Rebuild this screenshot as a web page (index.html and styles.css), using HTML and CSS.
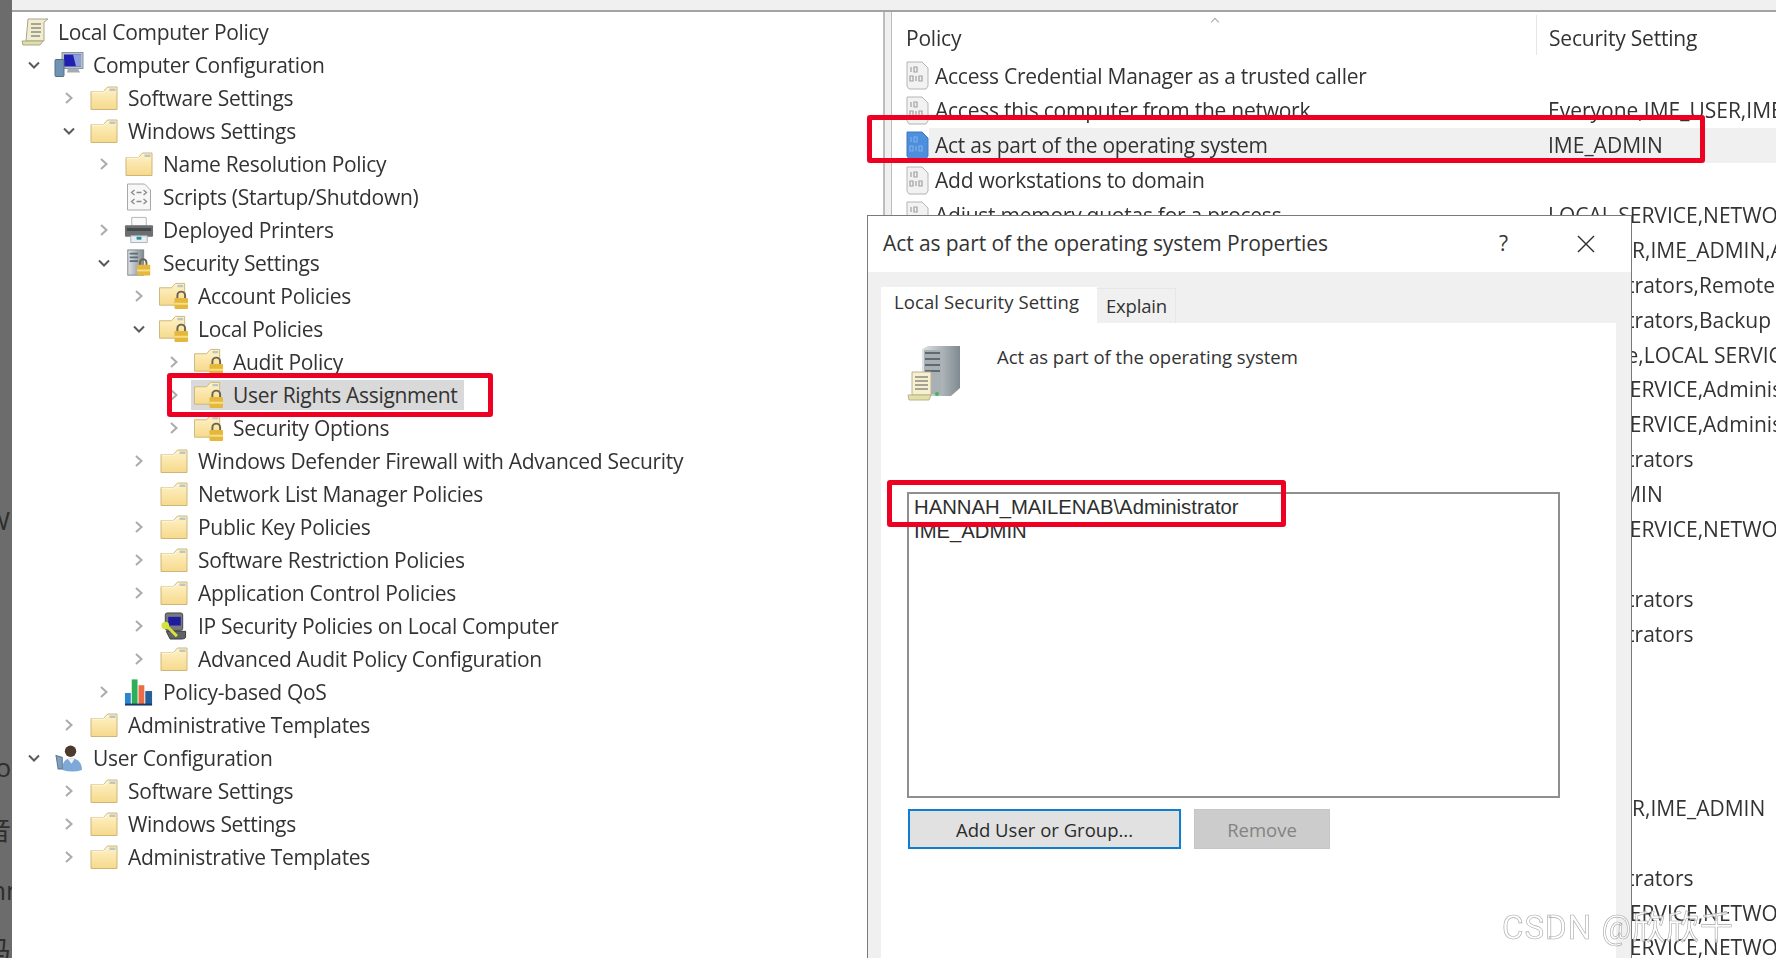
FILE: index.html
```html
<!DOCTYPE html>
<html lang="en">

<head>
    <meta charset="UTF-8">
    <meta name="viewport" content="width=device-width, initial-scale=1.0">
    <title>Local Security Policy</title>
    <link rel="stylesheet" href="styles.css">
</head>

<body>

    <svg class="defs" width="0" height="0">
        <defs>
            <linearGradient id="g-folder" x1="0" y1="0" x2="0" y2="1">
                <stop offset="0" stop-color="#fff3c8" />
                <stop offset="1" stop-color="#f6d98c" />
            </linearGradient>
            <linearGradient id="g-tower" x1="0" y1="0" x2="1" y2="0">
                <stop offset="0" stop-color="#dfe3e6" />
                <stop offset="1" stop-color="#7f8a90" />
            </linearGradient>
            <symbol id="i-chev-right" viewBox="0 0 14 14">
                <polyline points="4,2 9.5,7 4,12" fill="none" stroke="#ababab" stroke-width="2" />
            </symbol>
            <symbol id="i-chev-down" viewBox="0 0 14 14">
                <polyline points="2,4.5 7,9.5 12,4.5" fill="none" stroke="#5a5a5a" stroke-width="2" />
            </symbol>
            <symbol id="i-folder" viewBox="-1.5 -2 30 28">
                <path d="M.5 5.5H13L17 1H26.500V23.500H.5Z" fill="url(#g-folder)" stroke="#cdb678" />
                <path d="M19 2.500H25V5H19Z" fill="#b9c6cc" />
                <path d="M1 6H13.500L17.500 2" fill="none" stroke="#fffbe6" />
            </symbol>
            <symbol id="i-lock-folder" viewBox="0 0 31 28">
                <path d="M.5 5.500H13L17 1H26.500V23.500H.5Z" fill="url(#g-folder)" stroke="#cdb678" />
                <path d="M19 2.500H25V5H19Z" fill="#b9c6cc" />
                <path d="M19 17V13.500A4 4 0 0 1 27 13.500V17" fill="none" stroke="#6b6350" stroke-width="2" />
                <rect x="16" y="16" width="14" height="11.500" rx="1" fill="#e5b83c" />
                <rect x="16" y="21" width="14" height="2" fill="#f7df8a" />
            </symbol>
            <symbol id="i-scroll" viewBox="0 0 28 28">
                <path d="M7 1H27L23 4V23H5Z" fill="#f3edd0" stroke="#a7a68c" />
                <path d="M10 6H20M10 10H20M10 14H20M10 18H19" stroke="#8c8c84" stroke-width="1.500" />
                <path d="M1 23H22L19 27H2Z" fill="#dfe0a8" stroke="#a7a68c" />
            </symbol>
            <symbol id="i-computer" viewBox="0 0 30 27">
                <rect x="8" y="1" width="21" height="16" fill="#b8c0c8" stroke="#8b959d" />
                <rect x="10" y="3" width="17" height="12" fill="#1f1fb0" />
                <path d="M19 3H27V15H22Z" fill="#8d9fd8" />
                <rect x="1" y="8" width="9" height="17" rx="1" fill="#6f93b3" stroke="#576f86" />
                <path d="M14 17H24L26 21H13Z" fill="#a4acb3" />
            </symbol>
            <symbol id="i-script" viewBox="0 0 25 28">
                <path d="M1 1H18L24 7V27H1Z" fill="#f7f7f7" stroke="#a8a8a8" />
                <path d="M8 7L5 9.500 8 12M17 7L20 9.500 17 12M8 16L5 18.500 8 21M17 16L20 18.500 17 21M10 9.500H15M10 18.500H15" fill="none" stroke="#8a8a8a" stroke-width="1.300" />
            </symbol>
            <symbol id="i-printer" viewBox="0 0 31 28">
                <path d="M8 1H23V10H8Z" fill="#fafafa" stroke="#b5b5b5" />
                <rect x="1" y="9" width="29" height="12" rx="1" fill="#6c6f72" />
                <rect x="3" y="12" width="25" height="3" fill="#45484b" />
                <path d="M7 20H24V27H7Z" fill="#e9eef3" stroke="#a7b3bd" />
                <rect x="13" y="21" width="5" height="3" fill="#2b8f9c" />
            </symbol>
            <symbol id="i-sec-server" viewBox="0 0 26 30">
                <rect x="1" y="1" width="17" height="27" fill="url(#g-tower)" stroke="#78848a" />
                <path d="M3 5H12M3 9H12M3 13H12" stroke="#5c6b78" stroke-width="2" />
                <path d="M14 18V14.500A3.500 3.500 0 0 1 21 14.500V18" fill="none" stroke="#6b6350" stroke-width="2" />
                <rect x="11" y="17" width="14" height="11.500" rx="1" fill="#e5b83c" />
                <rect x="11" y="22" width="14" height="2" fill="#f7df8a" />
            </symbol>
            <symbol id="i-key-pc" viewBox="0 0 28 29">
                <rect x="5" y="1" width="18" height="18" rx="2" fill="#77797c" stroke="#3f4144" />
                <rect x="8" y="5" width="13" height="9" fill="#1d1ca0" />
                <path d="M6 20H26V26Q26 28 22 28H10Z" fill="#606366" stroke="#37393b" />
                <circle cx="5" cy="14" r="4" fill="#d8e23c" />
                <path d="M7 15L17 25" stroke="#d8e23c" stroke-width="3" />
            </symbol>
            <symbol id="i-chart" viewBox="0 0 31 28">
                <rect x="1" y="15" width="6" height="12" fill="#2a86d0" />
                <rect x="8" y="1" width="6" height="26" fill="#2fae5a" />
                <rect x="15" y="7" width="6" height="20" fill="#ea6d45" />
                <rect x="22" y="13" width="7" height="14" fill="#23609c" />
                <path d="M1 27H29" stroke="#153a63" stroke-width="2" />
            </symbol>
            <symbol id="i-user" viewBox="0 0 27 27">
                <path d="M7 25C7 16 11 14 16 14S26 17 26 25Q17 28 7 25Z" fill="#7ea8d8" />
                <circle cx="15" cy="7" r="5.500" fill="#4d3a2e" />
                <path d="M12 14L16 19 19 14Z" fill="#f2f2f2" />
                <path d="M1 11L7 13V24L3 24Z" fill="#7fa0c0" stroke="#5c7b99" />
            </symbol>
            <symbol id="i-policy" viewBox="0 0 23 29">
                <path d="M1 1H16L22 7V25L20 28H3L1 25Z" fill="#f2f2f2" stroke="#b4b4b4" />
                <path d="M5 6V11M8 6H11V11H8ZM4 15H7V20H4ZM10 15V20M13 15H16V20H13Z" fill="none" stroke="#a0a0a0" stroke-width="1.200" />
            </symbol>
            <symbol id="i-policy-sel" viewBox="0 0 23 29">
                <path d="M1 1H16L22 7V25L20 28H3L1 25Z" fill="#4d8fdc" stroke="#3f78bf" />
                <path d="M5 6V11M8 6H11V11H8ZM4 15H7V20H4ZM10 15V20M13 15H16V20H13Z" fill="none" stroke="#7fb0ea" stroke-width="1.200" />
            </symbol>
            <symbol id="i-server-doc" viewBox="0 0 54 58">
                <path d="M15 5L21 2H53V44L44 52H15Z" fill="url(#g-tower)" />
                <path d="M17 6H34V50H17Z" fill="#a9b0b3" />
                <path d="M18 9H33M18 15H33M18 21H33M18 27H33" stroke="#5f6b72" stroke-width="2" />
                <circle cx="30" cy="50" r="2" fill="#3fb65f" />
                <path d="M5 28H24V51H5Z" fill="#f6efd0" stroke="#b9b38f" />
                <path d="M8 33H21M8 37H21M8 41H21M8 45H21" stroke="#8d8b7e" stroke-width="1.500" />
                <path d="M1 51H24L22 56H2Z" fill="#e3e0a6" stroke="#b9b38f" />
            </symbol>
        </defs>
    </svg>

    <div class="screen">
        <div class="strip">
            <span class="frag frag-a">W</span>
            <span class="frag frag-b">Vo</span>
            <span class="frag frag-c">音</span>
            <span class="frag frag-d">mn</span>
            <span class="frag frag-e">马</span>
        </div>

        <div class="console">
            <div class="topbar"></div>
            <div class="panes">
                <div class="tree">
                    <div class="row root"><span class="node"><svg class="icon"><use href="#i-scroll" /></svg><span class="label">Local Computer Policy</span></span></div>
                    <div class="row lv0"><svg class="twisty"><use href="#i-chev-down" /></svg><span class="node"><svg class="icon"><use href="#i-computer" /></svg><span class="label">Computer Configuration</span></span></div>
                    <div class="row lv1"><svg class="twisty"><use href="#i-chev-right" /></svg><span class="node"><svg class="icon"><use href="#i-folder" /></svg><span class="label">Software Settings</span></span></div>
                    <div class="row lv1"><svg class="twisty"><use href="#i-chev-down" /></svg><span class="node"><svg class="icon"><use href="#i-folder" /></svg><span class="label">Windows Settings</span></span></div>
                    <div class="row lv2"><svg class="twisty"><use href="#i-chev-right" /></svg><span class="node"><svg class="icon"><use href="#i-folder" /></svg><span class="label">Name Resolution Policy</span></span></div>
                    <div class="row lv2"><svg class="twisty"></svg><span class="node"><svg class="icon"><use href="#i-script" /></svg><span class="label">Scripts (Startup/Shutdown)</span></span></div>
                    <div class="row lv2"><svg class="twisty"><use href="#i-chev-right" /></svg><span class="node"><svg class="icon"><use href="#i-printer" /></svg><span class="label">Deployed Printers</span></span></div>
                    <div class="row lv2"><svg class="twisty"><use href="#i-chev-down" /></svg><span class="node"><svg class="icon"><use href="#i-sec-server" /></svg><span class="label">Security Settings</span></span></div>
                    <div class="row lv3"><svg class="twisty"><use href="#i-chev-right" /></svg><span class="node"><svg class="icon"><use href="#i-lock-folder" /></svg><span class="label">Account Policies</span></span></div>
                    <div class="row lv3"><svg class="twisty"><use href="#i-chev-down" /></svg><span class="node"><svg class="icon"><use href="#i-lock-folder" /></svg><span class="label">Local Policies</span></span></div>
                    <div class="row lv4"><svg class="twisty"><use href="#i-chev-right" /></svg><span class="node"><svg class="icon"><use href="#i-lock-folder" /></svg><span class="label">Audit Policy</span></span></div>
                    <div class="row lv4"><svg class="twisty"><use href="#i-chev-right" /></svg><span class="node selected"><svg class="icon"><use href="#i-lock-folder" /></svg><span class="label">User Rights Assignment</span></span></div>
                    <div class="row lv4"><svg class="twisty"><use href="#i-chev-right" /></svg><span class="node"><svg class="icon"><use href="#i-lock-folder" /></svg><span class="label">Security Options</span></span></div>
                    <div class="row lv3"><svg class="twisty"><use href="#i-chev-right" /></svg><span class="node"><svg class="icon"><use href="#i-folder" /></svg><span class="label">Windows Defender Firewall with Advanced Security</span></span></div>
                    <div class="row lv3"><svg class="twisty"></svg><span class="node"><svg class="icon"><use href="#i-folder" /></svg><span class="label">Network List Manager Policies</span></span></div>
                    <div class="row lv3"><svg class="twisty"><use href="#i-chev-right" /></svg><span class="node"><svg class="icon"><use href="#i-folder" /></svg><span class="label">Public Key Policies</span></span></div>
                    <div class="row lv3"><svg class="twisty"><use href="#i-chev-right" /></svg><span class="node"><svg class="icon"><use href="#i-folder" /></svg><span class="label">Software Restriction Policies</span></span></div>
                    <div class="row lv3"><svg class="twisty"><use href="#i-chev-right" /></svg><span class="node"><svg class="icon"><use href="#i-folder" /></svg><span class="label">Application Control Policies</span></span></div>
                    <div class="row lv3"><svg class="twisty"><use href="#i-chev-right" /></svg><span class="node"><svg class="icon"><use href="#i-key-pc" /></svg><span class="label">IP Security Policies on Local Computer</span></span></div>
                    <div class="row lv3"><svg class="twisty"><use href="#i-chev-right" /></svg><span class="node"><svg class="icon"><use href="#i-folder" /></svg><span class="label">Advanced Audit Policy Configuration</span></span></div>
                    <div class="row lv2"><svg class="twisty"><use href="#i-chev-right" /></svg><span class="node"><svg class="icon"><use href="#i-chart" /></svg><span class="label">Policy-based QoS</span></span></div>
                    <div class="row lv1"><svg class="twisty"><use href="#i-chev-right" /></svg><span class="node"><svg class="icon"><use href="#i-folder" /></svg><span class="label">Administrative Templates</span></span></div>
                    <div class="row lv0"><svg class="twisty"><use href="#i-chev-down" /></svg><span class="node"><svg class="icon"><use href="#i-user" /></svg><span class="label">User Configuration</span></span></div>
                    <div class="row lv1"><svg class="twisty"><use href="#i-chev-right" /></svg><span class="node"><svg class="icon"><use href="#i-folder" /></svg><span class="label">Software Settings</span></span></div>
                    <div class="row lv1"><svg class="twisty"><use href="#i-chev-right" /></svg><span class="node"><svg class="icon"><use href="#i-folder" /></svg><span class="label">Windows Settings</span></span></div>
                    <div class="row lv1"><svg class="twisty"><use href="#i-chev-right" /></svg><span class="node"><svg class="icon"><use href="#i-folder" /></svg><span class="label">Administrative Templates</span></span></div>
                </div>

                <div class="sash"></div>

                <div class="list">
                    <div class="list-head">
                        <span class="head-cell head-policy">Policy<span class="sort-caret"></span></span>
                        <span class="head-cell head-setting">Security Setting</span>
                    </div>
                    <div class="item"><svg class="item-icon"><use href="#i-policy" /></svg><span class="cell name">Access Credential Manager as a trusted caller</span><span class="cell"></span></div>
                    <div class="item"><svg class="item-icon"><use href="#i-policy" /></svg><span class="cell name">Access this computer from the network</span><span class="cell">Everyone,IME_USER,IME_ADMIN</span></div>
                    <div class="item current"><svg class="item-icon"><use href="#i-policy-sel" /></svg><span class="cell name">Act as part of the operating system</span><span class="cell">IME_ADMIN</span></div>
                    <div class="item"><svg class="item-icon"><use href="#i-policy" /></svg><span class="cell name">Add workstations to domain</span><span class="cell"></span></div>
                    <div class="item"><svg class="item-icon"><use href="#i-policy" /></svg><span class="cell name">Adjust memory quotas for a process</span><span class="cell">LOCAL SERVICE,NETWORK SERVICE</span></div>
                    <div class="item"><span></span><span class="cell name"></span><span class="cell">IME_USER,IME_ADMIN,Administrators</span></div>
                    <div class="item"><span></span><span class="cell name"></span><span class="cell">Administrators,Remote Desktop Users</span></div>
                    <div class="item"><span></span><span class="cell name"></span><span class="cell">Administrators,Backup Operators</span></div>
                    <div class="item"><span></span><span class="cell name"></span><span class="cell">Everyone,LOCAL SERVICE,NETWORK SERVICE</span></div>
                    <div class="item"><span></span><span class="cell name"></span><span class="cell">LOCAL SERVICE,Administrators</span></div>
                    <div class="item"><span></span><span class="cell name"></span><span class="cell">LOCAL SERVICE,Administrators</span></div>
                    <div class="item"><span></span><span class="cell name"></span><span class="cell">Administrators</span></div>
                    <div class="item"><span></span><span class="cell name"></span><span class="cell">IME_ADMIN</span></div>
                    <div class="item"><span></span><span class="cell name"></span><span class="cell">LOCAL SERVICE,NETWORK SERVICE</span></div>
                    <div class="item"><span></span><span class="cell name"></span><span class="cell"></span></div>
                    <div class="item"><span></span><span class="cell name"></span><span class="cell">Administrators</span></div>
                    <div class="item"><span></span><span class="cell name"></span><span class="cell">Administrators</span></div>
                    <div class="item"><span></span><span class="cell name"></span><span class="cell"></span></div>
                    <div class="item"><span></span><span class="cell name"></span><span class="cell"></span></div>
                    <div class="item"><span></span><span class="cell name"></span><span class="cell"></span></div>
                    <div class="item"><span></span><span class="cell name"></span><span class="cell"></span></div>
                    <div class="item"><span></span><span class="cell name"></span><span class="cell">IME_USER,IME_ADMIN</span></div>
                    <div class="item"><span></span><span class="cell name"></span><span class="cell"></span></div>
                    <div class="item"><span></span><span class="cell name"></span><span class="cell">Administrators</span></div>
                    <div class="item"><span></span><span class="cell name"></span><span class="cell">LOCAL SERVICE,NETWORK SERVICE</span></div>
                    <div class="item"><span></span><span class="cell name"></span><span class="cell">LOCAL SERVICE,NETWORK SERVICE</span></div>
                </div>
            </div>
        </div>
    </div>

    <div class="dialog">
        <div class="dialog-title">
            <span class="dialog-name">Act as part of the operating system Properties</span>
            <span class="dialog-help">?</span>
            <svg class="dialog-close" viewBox="0 0 18 18">
                <path d="M1 1L17 17M17 1L1 17" stroke="#2b2b2b" stroke-width="1.400" />
            </svg>
        </div>
        <div class="dialog-body">
            <div class="tabs">
                <span class="tab tab-active">Local Security Setting</span>
                <span class="tab tab-other">Explain</span>
            </div>
            <div class="tab-panel">
                <div class="panel-head">
                    <svg class="panel-icon"><use href="#i-server-doc" /></svg>
                    <span class="panel-text">Act as part of the operating system</span>
                </div>
                <div class="listbox">
                    <div class="listbox-item">HANNAH_MAILENAB\Administrator</div>
                    <div class="listbox-item">IME_ADMIN</div>
                </div>
                <div class="buttons">
                    <button class="btn btn-add">Add User or Group...</button>
                    <button class="btn btn-remove">Remove</button>
                </div>
            </div>
        </div>
    </div>

    <div class="mark mark-tree"></div>
    <div class="mark mark-policy"></div>
    <div class="mark mark-user"></div>

    <div class="watermark">CSDN @欣欣千</div>

</body>

</html>
```

FILE: styles.css
```css
html, body {
    margin: 0;
    padding: 0;
    height: 100%;
    overflow: hidden;
}

body {
    font-family: 'Open Sans', 'Noto Sans CJK SC', sans-serif;
    font-size: 20px;
    color: #333;
    background-color: #fff;
    position: relative;
    filter: blur(0.45px);
}

.defs {
    position: absolute;
}

.screen {
    display: flex;
    height: 100vh;
}

.strip {
    width: 12px;
    flex: none;
    background-color: #6c6c6c;
    overflow: hidden;
    padding-top: 505px;
    box-sizing: border-box;
}

.frag {
    display: block;
    height: 30px;
    line-height: 30px;
    font-size: 26px;
    color: #2e2e2e;
    white-space: nowrap;
    margin-left: -14px;
}

.frag-b { margin-top: 217px; margin-left: -20px; }
.frag-c { margin-top: 33px; margin-left: -15px; }
.frag-d { margin-top: 30px; margin-left: -18px; }
.frag-e { margin-top: 30px; margin-left: -15px; }

.console {
    flex: 1;
    min-width: 0;
    display: flex;
    flex-direction: column;
}

.topbar {
    height: 10px;
    flex: none;
    background-color: #f0f0f0;
    border-bottom: 2px solid #a3a3a3;
}

.panes {
    flex: 1;
    display: flex;
    min-height: 0;
}

/* left tree */
.tree {
    width: 873px;
    flex: none;
    box-sizing: border-box;
    border-right: 2px solid #bdbdbd;
    padding-top: 3px;
}

.row {
    display: flex;
    align-items: center;
    height: 33.04px;
    white-space: nowrap;
}

.root { padding-left: 5px; }
.lv0 { padding-left: 15px; }
.lv1 { padding-left: 50px; }
.lv2 { padding-left: 85px; }
.lv3 { padding-left: 120px; }
.lv4 { padding-left: 155px; }

.twisty {
    width: 14px;
    height: 14px;
    flex: none;
    margin-right: 10px;
}

.node {
    display: inline-flex;
    align-items: center;
    height: 30px;
    padding: 0 6px 0 3px;
}

.selected {
    background-color: #d9d9d9;
}

.icon {
    width: 30px;
    height: 28px;
    flex: none;
    margin-right: 9px;
}

.root .icon {
    margin-right: 8px;
}

.label {
    font-size: 21px;
    letter-spacing: -0.3px;
}

.sash {
    width: 6px;
    flex: none;
    background-color: #f0f0f0;
    border-right: 1px solid #bdbdbd;
}

/* right list */
.list {
    flex: 1;
    min-width: 0;
    overflow: hidden;
}

.list-head {
    display: flex;
    height: 46.5px;
    align-items: center;
    padding-left: 14px;
    position: relative;
    white-space: nowrap;
}

.head-policy {
    width: 630px;
    height: 40px;
    line-height: 46px;
    flex: none;
    position: relative;
}

.head-setting {
    padding-left: 12px;
    border-left: 1px solid #e6e6e6;
    height: 40px;
    line-height: 46px;
}

.head-cell {
    font-size: 21px;
    letter-spacing: -0.2px;
}

.sort-caret {
    position: absolute;
    left: 306px;
    top: 4px;
    width: 5px;
    height: 5px;
    border-left: 1px solid #a8a8a8;
    border-top: 1px solid #a8a8a8;
    transform: rotate(45deg);
}

.item {
    display: grid;
    grid-template-columns: 23px 619px 1fr;
    height: 34.88px;
    align-items: stretch;
    padding-left: 14px;
    white-space: nowrap;
}

.item-icon {
    width: 23px;
    height: 29px;
    align-self: center;
}

.cell {
    font-size: 21px;
    line-height: 34.88px;
    overflow: hidden;
}

.name {
    padding-left: 6px;
    letter-spacing: -0.25px;
}

.current .cell {
    background-color: #f0f0f0;
}

/* properties dialog */
.dialog {
    position: absolute;
    left: 867px;
    top: 215px;
    width: 765px;
    bottom: 0;
    box-sizing: border-box;
    border: 1px solid #7a7a7a;
    border-bottom: none;
    background-color: #fff;
    display: flex;
    flex-direction: column;
    z-index: 2;
}

.dialog-title {
    height: 56px;
    flex: none;
    display: flex;
    align-items: center;
    padding-left: 15px;
    background-color: #fff;
}

.dialog-name {
    font-size: 21px;
    letter-spacing: -0.08px;
    width: 616px;
    margin-top: -2px;
}

.dialog-help {
    width: 78px;
    font-size: 21px;
    margin-top: -2px;
}

.dialog-close {
    width: 18px;
    height: 18px;
}

.dialog-body {
    flex: 1;
    min-height: 0;
    background-color: #f0f0f0;
    padding: 15px 15px 0 13px;
    display: flex;
    flex-direction: column;
}

.tabs {
    display: flex;
    align-items: flex-end;
    height: 36px;
    flex: none;
}

.tab {
    font-size: 18.5px;
    box-sizing: border-box;
    white-space: nowrap;
}

.tab-active {
    width: 216px;
    height: 36px;
    line-height: 29px;
    padding-left: 13px;
    letter-spacing: 0.1px;
    background-color: #fff;
}

.tab-other {
    width: 79px;
    height: 35px;
    line-height: 33px;
    padding-left: 9px;
    letter-spacing: -0.2px;
    border: 1px solid #e6e6e6;
    border-bottom: none;
    border-left: none;
}

.tab-panel {
    flex: 1;
    min-height: 0;
    background-color: #fff;
    padding: 21px 0 0 26px;
}

.panel-head {
    display: flex;
    height: 148px;
}

.panel-icon {
    width: 54px;
    height: 58px;
    flex: none;
    margin-right: 36px;
}

.panel-text {
    font-size: 18.5px;
    line-height: 26px;
}

.listbox {
    width: 653px;
    height: 306px;
    box-sizing: border-box;
    border: 2px solid #8f8f8f;
    padding: 1px 0 0 5px;
    font-family: 'Liberation Sans', sans-serif;
    font-size: 20.3px;
    color: #2e2e2e;
    overflow: hidden;
}

.listbox-item {
    height: 24px;
    line-height: 24px;
}

.buttons {
    display: flex;
    gap: 13px;
    margin: 11px 0 0 1px;
}

.btn {
    height: 40px;
    box-sizing: border-box;
    font-family: 'Open Sans', sans-serif;
    font-size: 18.5px;
    padding: 0;
}

.btn-add {
    width: 273px;
    background-color: #e1e1e1;
    border: 2px solid #0e7fd0;
    color: #2b2b2b;
}

.btn-remove {
    width: 136px;
    background-color: #cccccc;
    border: 1px solid #c6c6c6;
    color: #838383;
}

/* red annotation boxes */
.mark {
    position: absolute;
    box-sizing: border-box;
    border: 5px solid #ee0022;
    border-radius: 3px;
    z-index: 3;
}

.mark-tree {
    left: 167px;
    top: 373px;
    width: 326px;
    height: 44px;
}

.mark-policy {
    left: 867px;
    top: 115px;
    width: 838px;
    height: 48px;
}

.mark-user {
    left: 887px;
    top: 480px;
    width: 399px;
    height: 47px;
}

.watermark {
    position: absolute;
    left: 1502px;
    top: 901px;
    font-family: 'Roboto', 'Noto Sans CJK SC', sans-serif;
    font-size: 33px;
    letter-spacing: 1px;
    white-space: nowrap;
    color: rgba(255, 255, 255, 0.75);
    -webkit-text-stroke: 0.6px #a8a8a8;
    z-index: 4;
}
```
